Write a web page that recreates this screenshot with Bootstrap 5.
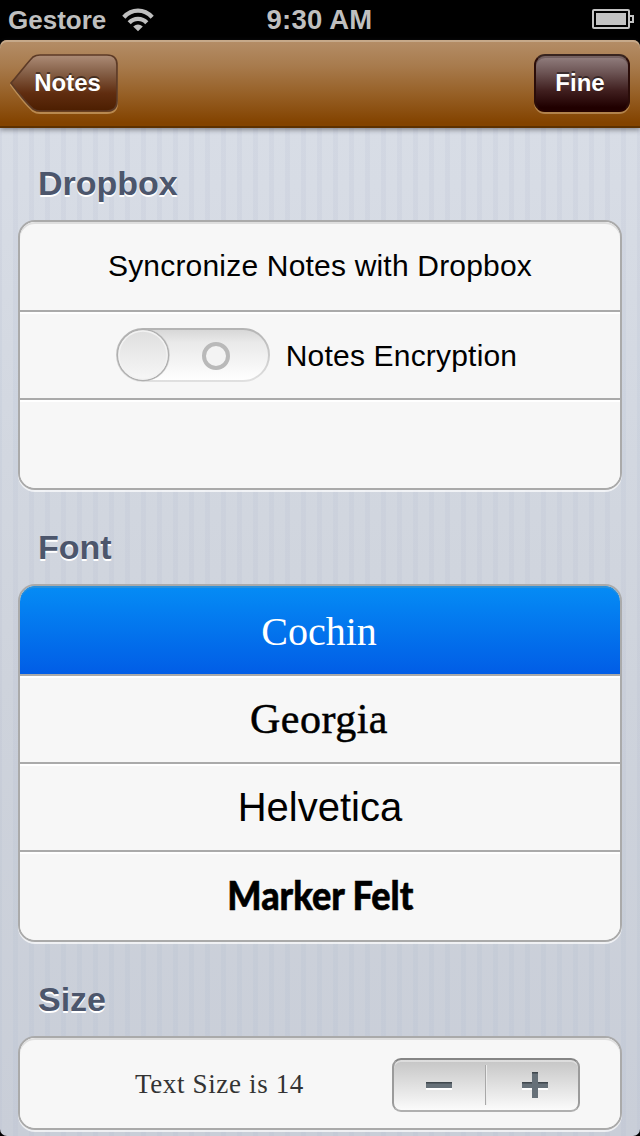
<!DOCTYPE html>
<html lang="it">
<head>
<meta charset="utf-8">
<meta name="viewport" content="width=device-width, initial-scale=1">
<title>Notes</title>
<link href="https://cdn.jsdelivr.net/npm/bootstrap@5.3.0/dist/css/bootstrap.min.css" rel="stylesheet">
<style>
body{background:#000;font-family:"Liberation Sans",Arial,sans-serif;color:#000;line-height:1;height:1136px;overflow:hidden}
.phone{width:640px;height:1136px;overflow:hidden}
.status{height:40px;color:#bfbfbf;font-weight:700;font-size:26px;padding:0 6px 0 8px;display:grid;grid-template-columns:1fr auto 1fr}
.clock{font-size:27.5px;letter-spacing:.2px;padding-right:3px}
.app-bar{height:88px;padding:14px 10px 0;border-radius:7px 7px 0 0;background:linear-gradient(#b58e68,#a87b4d 30%,#965f25 64%,#834300 96%);border-bottom:2px solid #5e3100;box-shadow:inset 0 2px #c6a98a,0 2px 5px rgba(60,60,70,.55);z-index:1}
.bar-text{font-weight:700;font-size:24px;color:#fff;text-shadow:0 -2px rgba(0,0,0,.45)}
.back{width:108px;height:58px;padding-left:7px}
.back svg{position:absolute;left:0;top:0}
.fine{width:96px;height:58px;border-radius:11px;border:2px solid #24120f;border-color:#38241f #2b0d09 #250200;background:linear-gradient(#938080,#6d5555 30%,#401f1f 64%,#200000 95%);box-shadow:0 2px rgba(200,160,110,.65),inset 0 2px rgba(50,30,30,.3);padding:0 4px 0 0}
.settings{height:1008px;padding:0 18px;border-radius:0 0 7px 7px;background:linear-gradient(90deg,rgba(165,175,200,.12) 2px,transparent 2px 13px,rgba(165,175,200,.12) 13px) 0 0/16px 100%,linear-gradient(#d8dde6,#ced3dc 55%,#c9ced8)}
.heading{font-size:34px;font-weight:700;color:#4c566c;text-shadow:0 2px #fff;margin:0;padding-left:20px;display:flex;align-items:center}
.group{border:2px solid #aaa;border-radius:17px;background:#f7f7f7;box-shadow:0 2px rgba(255,255,255,.7);overflow:hidden}
.group .cell{height:88px;border:0;border-bottom:2px solid #aaa;border-radius:0;box-shadow:inset 0 2px #fff;background:#f7f7f7;padding:0;display:flex;align-items:center;justify-content:center;color:#000;white-space:nowrap}
.group .cell:first-child{box-shadow:inset 0 2px #dedede;height:90px;border-radius:15px 15px 0 0}
.group .cell:last-child{border-bottom:0}
.group .cell.chosen{background:linear-gradient(#058cf5,#015de6);color:#fff;box-shadow:inset 0 2px #2b90da}
.t30{font-size:30px}
.t40{font-size:40px}
.serif{font-family:"Liberation Serif","Times New Roman",serif}
.marker-face{font-family:Lato,sans-serif;font-weight:900;transform:scaleX(.9);-webkit-text-stroke:.6px;margin-top:-2px}
.toggle{width:154px;height:54px;margin-right:16px}
.stepper{width:188px;height:54px;margin-top:4px;border:2px solid #aaa;border-color:#858585 #9b9b9b #b0b0b0;border-radius:9px;background:linear-gradient(#c5c5c5,#fbfbfb);box-shadow:inset 0 2px rgba(255,255,255,.4)}
.stepper .btn{height:40px;border:0;border-radius:0;padding:0}
.stepper .btn:first-child{border-right:1px solid #a8a8a8;box-shadow:1px 0 #ececec}
</style>
</head>
<body>
<div class="phone">
  <div class="status align-items-center">
    <div class="d-flex align-items-center"><span>Gestore</span>
      <svg class="ms-3" width="32" height="24" viewBox="0 0 32 24" fill="none" stroke="#bfbfbf" stroke-width="4.3"><path d="M1.8 9.2C10 .5 22 .5 30.200 9.200M7.200 14.700C12 9.500 20 9.500 24.800 14.700"/><path d="M16 23.300l-4.800-4.700q4.800-4 9.600 0z" fill="#bfbfbf" stroke="none"/></svg></div>
    <span class="clock">9:30 AM</span>
    <svg class="ms-auto" width="42" height="20" viewBox="0 0 42 20" fill="none" stroke="#c3c3c3" stroke-width="2" style="margin-top:-2px"><rect x="1" y="1" width="36" height="18" rx="1"/><path d="M38 7h3v6h-3"/><path d="M4 4h30v12H4z" fill="#c3c3c3" stroke="none"/></svg>
  </div>

  <nav class="app-bar position-relative d-flex justify-content-between align-items-start">
    <div class="back position-relative d-flex align-items-center justify-content-center">
      <svg width="108" height="61" viewBox="0 0 108 61"><defs><linearGradient id="bk" x2="0" y2="1"><stop stop-color="#ad8c77"/><stop offset=".3" stop-color="#87624a"/><stop offset=".68" stop-color="#602d10"/><stop offset="1" stop-color="#4c1e00"/></linearGradient></defs>
        <path d="M1 31C9 22 17 11 23 5Q26 3 30 3H97Q107 3 107 13V49Q107 59 97 59H30Q26 59 23 57Q15 50 1 31Z" fill="none" stroke="#c89d67" stroke-opacity=".75" stroke-width="2"/>
        <path d="M1 29C9 20 17 9 23 3Q26 1 30 1H97Q107 1 107 11V47Q107 57 97 57H30Q26 57 23 55Q15 48 1 29Z" fill="url(#bk)" stroke="#5c3a26" stroke-width="1.700"/></svg>
      <span class="bar-text position-relative">Notes</span>
    </div>
    <div class="fine d-flex align-items-center justify-content-center"><span class="bar-text">Fine</span></div>
  </nav>

  <main class="settings">
    <h2 class="heading" style="height:92px;padding-top:18px">Dropbox</h2>
    <div class="group list-group">
      <div class="cell list-group-item t30"><span style="letter-spacing:.19px">Syncronize Notes with Dropbox</span></div>
      <div class="cell list-group-item t30" style="padding:2px 7px 0 0">
        <svg class="toggle" viewBox="0 0 154 54" style="margin-top:-2px"><defs><linearGradient id="tr" x2="0" y2="1"><stop stop-color="#d6d6d6"/><stop offset=".25" stop-color="#e9e9e9"/><stop offset=".55" stop-color="#f2f2f2"/><stop offset="1" stop-color="#fff"/></linearGradient><linearGradient id="ed" x2="0" y2="1"><stop stop-color="#b4b4b4"/><stop offset="1" stop-color="#e0e0e0"/></linearGradient><linearGradient id="kn" x2="0" y2="1"><stop stop-color="#dedede"/><stop offset="1" stop-color="#f7f7f7"/></linearGradient></defs>
          <rect x="1" y="1" width="152" height="52" rx="26" fill="url(#tr)" stroke="url(#ed)" stroke-width="2"/>
          <circle cx="28" cy="27" r="26" fill="#ccc" opacity=".6"/>
          <circle cx="27" cy="27" r="25.500" fill="url(#kn)" stroke="#b0b0b0" stroke-width="1.500"/><circle cx="27" cy="27" r="24" fill="none" stroke="#f2f2f2" stroke-width="1.500"/>
          <circle cx="100" cy="28" r="12" fill="#f3f3f3" stroke="#b9b9b9" stroke-width="4"/></svg>
        <span style="letter-spacing:.19px">Notes Encryption</span></div>
      <div class="cell list-group-item"></div>
    </div>

    <h2 class="heading" style="height:94px;padding-top:20px">Font</h2>
    <div class="group list-group">
      <div class="cell list-group-item chosen t40 serif" style="padding:3px 2px 0 0"><span>Cochin</span></div>
      <div class="cell list-group-item serif" style="font-size:42px;padding:0 2px 0 0"><span style="letter-spacing:.5px;-webkit-text-stroke:.5px">Georgia</span></div>
      <div class="cell list-group-item t40"><span>Helvetica</span></div>
      <div class="cell list-group-item t40"><span class="marker-face">Marker Felt</span></div>
    </div>

    <h2 class="heading" style="height:94px;padding-top:20px">Size</h2>
    <div class="group list-group">
      <div class="cell list-group-item justify-content-end" style="padding-right:40px">
        <span class="serif" style="font-size:27px;letter-spacing:.65px;color:#333;margin:2px 88px 0 0">Text Size is 14</span>
        <div class="stepper d-flex align-items-center">
          <div class="btn d-flex align-items-center justify-content-center w-50"><svg style="margin-right:2px" width="26" height="26" viewBox="0 0 26 26"><path d="M0 12h26v6H0z" fill="#fff"/><path d="M0 10h26v6H0z" fill="#667078"/><path d="M0 10h26v1.500H0z" fill="#3f474d"/></svg></div>
          <div class="btn d-flex align-items-center justify-content-center w-50"><svg style="margin-left:6px" width="26" height="28" viewBox="0 -1 26 28"><path d="M0 12h26v6H0z" fill="#fff"/><path d="M10 0h6v10h10v6H16v10h-6V16H0v-6h10z" fill="#667078"/><path d="M10 0h6v1.500h-6zM0 10h10v1.500H0zM16 10h10v1.500H16z" fill="#3f474d"/></svg></div>
        </div>
      </div>
    </div>
  </main>
</div>
<script src="https://cdn.jsdelivr.net/npm/bootstrap@5.3.0/dist/js/bootstrap.bundle.min.js"></script>
</body>
</html>
